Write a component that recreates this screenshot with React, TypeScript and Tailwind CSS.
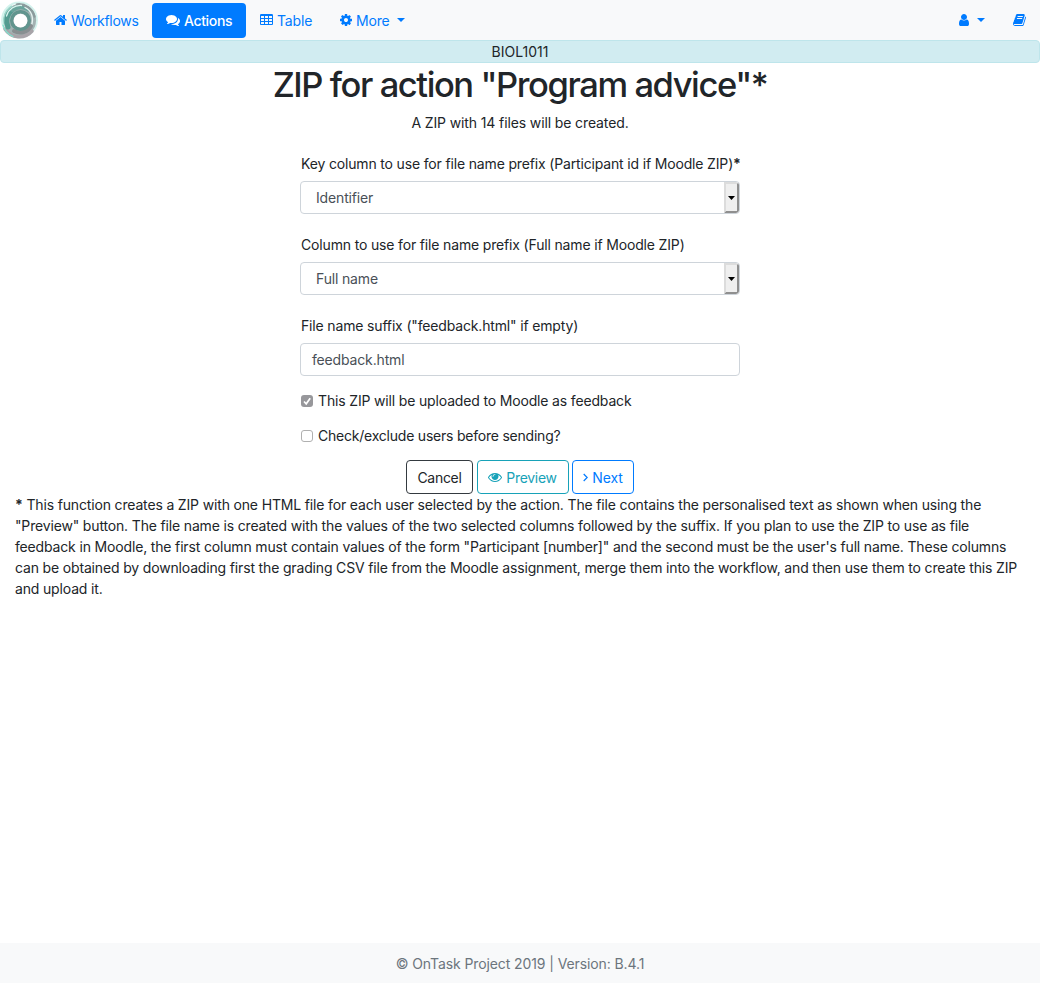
import type { ReactNode } from "react";

const paths = {
  home: "M1472 992v480q0 26-19 45t-45 19h-384v-384h-256v384h-384q-26 0-45-19t-19-45v-480q0-1 .5-3t.5-3l575-474 575 474q1 2 1 6zm223-69l-62 74q-8 9-21 11h-3q-13 0-21-7l-692-577-692 577q-12 8-24 7-13-2-21-11l-62-74q-8-10-7-23.5t11-21.5l719-599q32-26 76-26t76 26l244 204v-195q0-14 9-23t23-9h192q14 0 23 9t9 23v408l219 182q10 8 11 21.5t-7 23.5z",
  comments:
    "M1408 768q0 139-94 257t-256.500 186.500-353.500 68.500q-86 0-176-16-124 88-278 128-36 9-86 16h-3q-11 0-20.500-8t-11.500-21q-1-3-1-6.500t.5-6.500 2-6l2.500-5t3.500-5.500 4-5 4.500-5 4-4.500q5-6 23-25t26-29.500 22.500-29 25-38.500 20.500-44q-124-72-195-177t-71-224q0-139 94-257t256.500-186.500 353.500-68.500 353.500 68.500 256.500 186.500 94 257zm384 256q0 120-71 224.500t-195 176.500q10 24 20.500 44t25 38.500 22.500 29 26 29.500 23 25q1 1 4 4.500t4.500 5 4 5 3.500 5.500l2.500 5t2 6 .5 6.500-1 6.500q-3 14-13 22t-22 7q-50-7-86-16-154-40-278-128-90 16-176 16-271 0-472-132 58 4 88 4 161 0 309-45t264-129q125-92 192-212t67-254q0-77-23-152 129 71 204 178t75 230z",
  table:
    "M224 128h1344q66 0 113 47t47 113v1088q0 66-47 113t-113 47h-1344q-66 0-113-47t-47-113v-1088q0-66 47-113t113-47zM192 416v192q0 32 32 32h320q32 0 32-32v-192q0-32-32-32h-320q-32 0-32 32zM704 416v192q0 32 32 32h320q32 0 32-32v-192q0-32-32-32h-320q-32 0-32 32zM1216 416v192q0 32 32 32h320q32 0 32-32v-192q0-32-32-32h-320q-32 0-32 32zM192 800v192q0 32 32 32h320q32 0 32-32v-192q0-32-32-32h-320q-32 0-32 32zM704 800v192q0 32 32 32h320q32 0 32-32v-192q0-32-32-32h-320q-32 0-32 32zM1216 800v192q0 32 32 32h320q32 0 32-32v-192q0-32-32-32h-320q-32 0-32 32zM192 1184v192q0 32 32 32h320q32 0 32-32v-192q0-32-32-32h-320q-32 0-32 32zM704 1184v192q0 32 32 32h320q32 0 32-32v-192q0-32-32-32h-320q-32 0-32 32zM1216 1184v192q0 32 32 32h320q32 0 32-32v-192q0-32-32-32h-320q-32 0-32 32z",
  cog: "M1152 896q0-106-75-181t-181-75-181 75-75 181 75 181 181 75 181-75 75-181zm512-109v222q0 12-8 23t-20 13l-185 28q-19 54-39 91 35 50 107 138 10 12 10 25t-9 23q-27 37-99 108t-94 71q-12 0-26-9l-138-108q-44 23-91 38-16 136-29 186-7 28-36 28h-222q-14 0-24.500-8.500t-11.500-21.500l-28-184q-49-16-90-37l-141 107q-10 9-25 9-14 0-25-11-126-114-165-168-7-10-7-23 0-12 8-23 15-21 51-66.500t54-70.500q-27-50-41-99l-183-27q-13-2-21-12.500t-8-23.500v-222q0-12 8-23t19-13l186-28q14-46 39-92-40-57-107-138-10-12-10-24 0-10 9-23 26-36 98.500-107.500t94.500-71.500q13 0 26 10l138 107q44-23 91-38 16-136 29-186 7-28 36-28h222q14 0 24.500 8.500t11.500 21.500l28 184q49 16 90 37l142-107q9-9 24-9 13 0 25 10 129 119 165 170 7 8 7 22 0 12-8 23-15 21-51 66.500t-54 70.500q26 50 41 98l183 28q13 2 21 12.500t8 23.500z",
  user: "M1536 1399q0 109-62.500 187t-150.500 78h-854q-88 0-150.500-78t-62.500-187q0-85 8.500-160.500t31.500-152 58.500-131 94-89 134.500-34.500q131 128 313 128t313-128q76 0 134.500 34.500t94 89 58.500 131 31.500 152 8.500 160.500zm-256-887q0 159-112.500 271.500t-271.500 112.500-271.500-112.500-112.500-271.500 112.500-271.500 271.500-112.500 271.500 112.500 112.500 271.500z",
  book: "M1703 478q40 57 18 129l-275 906q-19 64-76.500 107.500t-122.500 43.500h-923q-77 0-148.500-53.500t-99.500-131.500q-24-67-2-127 0-4 3-27t4-37q1-8-3-21.500t-3-19.500q2-11 8-21t16.500-23.500 16.500-23.500q23-38 45-91.500t30-91.500q3-10 .5-30t-.5-28q3-11 17-28t17-23q21-36 42-92t25-90q1-9-2.500-32t.5-28q4-13 22-30.500t22-22.500q19-26 42.500-84.500t27.500-96.500q1-8-3-25.500t-2-26.500q2-8 9-18t18-23 17-21q8-12 16.500-30.500t15-35 16-36 19.500-32 26.500-23.500 36-11.500 47.500 5.500l-1 3q38-9 51-9h761q74 0 114 56t18 130l-274 906q-36 119-71.500 153.500t-128.500 34.500h-869q-27 0-38 15-11 16-1 43 24 70 144 70h923q29 0 56-15.500t35-41.500l300-987q7-22 5-57 38 15 59 43zm-1064 2q-4 13 2 22.500t20 9.500h608q13 0 25.500-9.500t16.500-22.500l21-64q4-13-2-22.500t-20-9.500h-608q-13 0-25.500 9.500t-16.500 22.500zm-83 256q-4 13 2 22.500t20 9.500h608q13 0 25.500-9.500t16.500-22.500l21-64q4-13-2-22.500t-20-9.500h-608q-13 0-25.500 9.500t-16.500 22.500z",
  eye: "M1664 960q-152-236-381-353 61 104 61 225 0 185-131.500 316.500t-316.500 131.500-316.500-131.500-131.500-316.500q0-121 61-225-229 117-381 353 133 205 333.500 326.500t434.500 121.500 434.500-121.500 333.500-326.500zm-720-384q0-20-14-34t-34-14q-125 0-214.500 89.500t-89.500 214.500q0 20 14 34t34 14 34-14 14-34q0-86 61-147t147-61q20 0 34-14t14-34zm848 384q0 34-20 69-140 230-376.500 368.500t-499.500 138.500-499.500-139-376.500-368q-20-35-20-69t20-69q140-229 376.500-368t499.500-139 499.500 139 376.500 368q20 35 20 69z",
};

function Icon({ name, narrow }: { name: keyof typeof paths; narrow?: boolean }) {
  return (
    <svg
      viewBox={narrow ? "64 0 1664 1792" : "0 0 1792 1792"}
      className={narrow ? "h-3.5 w-[13px] shrink-0" : "size-3.5 shrink-0"}
      fill="currentColor"
      fillRule="evenodd"
    >
      <path d={paths[name]} />
    </svg>
  );
}

function Caret() {
  return (
    <svg viewBox="0 0 8 4" className="h-1 w-2 shrink-0" fill="currentColor">
      <path d="M0 0h8L4 4z" />
    </svg>
  );
}

function Logo() {
  return (
    <svg viewBox="0 0 40 40" className="size-10 shrink-0 bg-white" fill="none" strokeLinecap="round">
      <circle cx="19.500" cy="20" r="17.500" stroke="#d3f3ed" strokeWidth="1.800" />
      <circle cx="19.800" cy="20.300" r="16.300" fill="#a3b3b3" />
      <path d="M5 29a17 17 0 0 0 27 2" stroke="#a9a4a9" strokeWidth="3.500" />
      <path d="M4.500 24a15.500 15.500 0 0 1 7-17.500" stroke="#9ed8cc" strokeWidth="2" />
      <path d="M8 27a14 14 0 0 1 3.500-16.500" stroke="#549b90" strokeWidth="5" />
      <path d="M13 9.500a13.500 13.500 0 0 1 15-.5" stroke="#6aa59c" strokeWidth="5" />
      <path d="M17 4.500a16 16 0 0 1 17.500 12" stroke="#8b9c9d" strokeWidth="2.500" />
      <path d="M6.500 16a14.500 14.500 0 0 1 15-10.500" stroke="#d8f4ee" strokeWidth="1.300" />
      <path d="M25 7.500c6.500 3 9 10 6.500 18" stroke="#e7f5f2" strokeWidth="1.300" />
      <path d="M31 26a12.500 12.500 0 0 1-17 5" stroke="#898f91" strokeWidth="4" />
      <path d="M3 25a17.500 17.500 0 0 0 10 11.500" stroke="#82dfcd" strokeWidth="1.200" />
      <circle cx="20.500" cy="20.500" r="8.800" stroke="#61958e" strokeWidth="3.500" />
      <circle cx="20.500" cy="20.700" r="6.900" fill="white" />
    </svg>
  );
}

function SelectField({ label, value, star }: { label: ReactNode; value: string; star?: boolean }) {
  return (
    <div className="mb-5">
      <label className="mb-[7px] block h-[21px] whitespace-nowrap pl-px">
        {label}
        {star && <b>*</b>}
      </label>
      <div className="flex h-[33px] overflow-hidden rounded-[4px] border border-[#ced4da] text-[#495057]">
        <span className="flex-1 pl-[15px] leading-[32px]">{value}</span>
        <span className="flex w-[15px] items-center justify-center rounded-r-[3px] border-2 border-t-[#dcdcdc] border-r-[#8f8f8f] border-b-[#8f8f8f] border-l-[#dcdcdc] bg-[#efefef] text-black">
          <svg viewBox="0 0 7 4" className="h-[4px] w-[7px] shrink-0" fill="currentColor">
            <path d="M0 0h7L3.500 4z" />
          </svg>
        </span>
      </div>
    </div>
  );
}

export default function App() {
  return (
    <div className="flex h-[983px] flex-col bg-white font-['Inter',sans-serif] text-[14px] leading-[21px] tracking-[-0.16px] text-[#212529]">
      <nav className="flex h-10 items-center bg-[#f8f9fa] text-[#007bff]">
        <Logo />
        <a className="flex w-[112px] items-center gap-1 pl-[14px] tracking-[-0.3px]">
          <Icon name="home" narrow />
          Workflows
        </a>
        <a className="flex h-[35px] w-[94px] items-center gap-1 rounded-[4px] bg-[#007bff] pl-[14px] font-medium tracking-[-0.35px] text-white">
          <Icon name="comments" />
          Actions
        </a>
        <a className="flex w-[79px] items-center gap-1 pl-[14px]">
          <Icon name="table" narrow />
          Table
        </a>
        <a className="flex items-center gap-[3px] pl-[14px]">
          <Icon name="cog" />
          More
          <span className="pl-1">
            <Caret />
          </span>
        </a>
        <div className="ml-auto flex items-center gap-[6px] pr-[14px]">
          <Icon name="user" />
          <Caret />
          <span className="pl-[22px]">
            <Icon name="book" narrow />
          </span>
        </div>
      </nav>
      <div className="h-[23px] rounded-[4px] border border-[#bee5eb] bg-[#d1ecf1] text-center leading-[22px] tracking-normal">BIOL1011</div>
      <h1 className="h-[42px] text-center text-[34.500px] leading-[44px] font-medium tracking-[-1.42px] whitespace-nowrap">
        ZIP for action "Program advice"*
      </h1>
      <p className="mt-[7px] mb-5 text-center tracking-[-0.12px]">A ZIP with 14 files will be created.</p>
      <form className="mx-auto w-[440px]">
        <SelectField label="Key column to use for file name prefix (Participant id if Moodle ZIP)" value="Identifier" star />
        <SelectField label="Column to use for file name prefix (Full name if Moodle ZIP)" value="Full name" />
        <label className="mb-[7px] block pl-px">File name suffix ("feedback.html" if empty)</label>
        <div className="h-[33px] rounded-[4px] border border-[#ced4da] pl-[11px] leading-[32px] text-[#495057]">feedback.html</div>
        <div className="mt-[14px] flex items-center gap-[5px] pl-px">
          <span className="flex size-3 items-center justify-center rounded-[3px] bg-[#97979b] text-white">
            <svg viewBox="0 0 12 12" className="size-3" fill="none" stroke="currentColor" strokeWidth="1.700">
              <path d="M3 6.500l2.200 2.300L9.200 3.200" />
            </svg>
          </span>
          This ZIP will be uploaded to Moodle as feedback
        </div>
        <div className="mt-[14px] flex items-center gap-[5px] pl-px tracking-[-0.22px]">
          <span className="size-3 rounded-[3px] border border-[#b0b0b0]" />
          Check/exclude users before sending?
        </div>
      </form>
      <div className="mt-[14px] flex h-[34px] justify-center gap-[3.500px]">
        <button className="w-[67px] rounded-[4px] border border-[#343a40] tracking-[-0.3px]">Cancel</button>
        <button className="flex w-[92px] items-center justify-center gap-1 rounded-[4px] border border-[#17a2b8] text-[#17a2b8] tracking-[-0.3px]">
          <Icon name="eye" />
          Preview
        </button>
        <button className="flex w-[62px] items-center justify-center gap-1 rounded-[4px] border border-[#007bff] text-[#007bff]">
          <svg viewBox="0 0 5 14" className="h-3.5 w-[5px]" fill="none" stroke="currentColor" strokeWidth="1.200">
            <path d="M.7 4l3.500 3.500L.7 11" />
          </svg>
          Next
        </button>
      </div>
      <p className="px-[15px] whitespace-nowrap">
        <b>*</b> This function creates a ZIP with one HTML file for each user selected by the action. The file contains the personalised text as shown when using the
        <br />
        "Preview" button. The file name is created with the values of the two selected columns followed by the suffix. If you plan to use the ZIP to use as file
        <br />
        feedback in Moodle, the first column must contain values of the form "Participant [number]" and the second must be the user's full name. These columns
        <br />
        can be obtained by downloading first the grading CSV file from the Moodle assignment, merge them into the workflow, and then use them to create this ZIP
        <br />
        and upload it.
      </p>
      <footer className="mt-auto h-10 bg-[#f8f9fa] text-center leading-[42px] tracking-[-0.1px] text-[#6c757d]">© OnTask Project 2019 | Version: B.4.1</footer>
    </div>
  );
}
